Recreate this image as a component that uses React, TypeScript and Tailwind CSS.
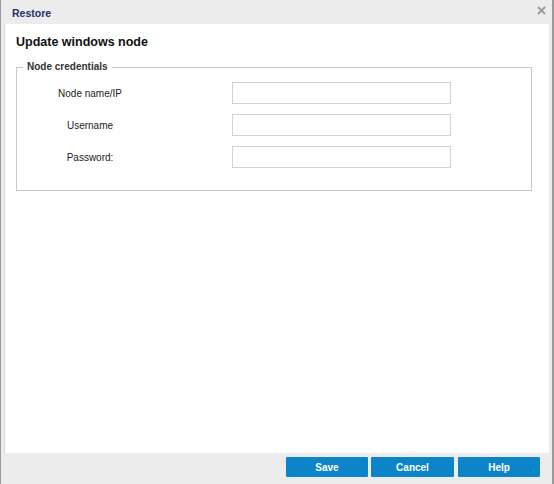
import React from "react";

const font = { fontFamily: '"Liberation Sans", Arial, sans-serif' };

function Row({ label, top }: { label: string; top?: boolean }) {
  return (
    <div className="flex items-center h-[22px]">
      <div className="w-[146px] text-center text-[10px] text-[#222]">{label}</div>
      <div className="w-[69px]" />
      <input
        type="text"
        className={`w-[219px] h-[22px] border bg-white outline-none ${top ? "border-[#c4d4e0]" : "border-[#d2d2d2]"}`}
      />
    </div>
  );
}

export default function App() {
  return (
    <div
      className="w-[554px] h-[484px] flex flex-col bg-[#ececec] border-l border-r-2 border-[#9a9a9a] overflow-hidden"
      style={font}
    >
      <div className="h-[24px] flex items-center justify-between pl-[11px] pr-[6px] pt-[3px] shrink-0">
        <span className="text-[10.5px] font-bold text-[#24306a]">Restore</span>
        <svg width="9" height="9" viewBox="0 0 9 9" className="mb-[7px]">
          <path d="M1 1 L8 8 M8 1 L1 8" stroke="#9a9a9a" strokeWidth="1.8" />
        </svg>
      </div>
      <div className="flex-1 mx-[3px] bg-white border-l border-[#d8d8d8] pl-[11px] pr-[17px]">
        <div className="pt-[10px] text-[12.5px] font-bold text-[#111] leading-[17px]">Update windows node</div>
        <fieldset className="mt-[10px] border border-[#c8c8c8] px-0 pt-0 pb-[22px]">
          <legend className="ml-[6px] px-[4px] text-[10px] font-bold text-[#333] leading-[12px]">Node credentials</legend>
          <div className="flex flex-col gap-[10px] mt-[9px]">
            <Row label="Node name/IP" top />
            <Row label="Username" />
            <Row label="Password:" />
          </div>
        </fieldset>
      </div>
      <div className="h-[31px] shrink-0 flex items-start justify-end gap-[3px] pt-[4px] pr-[12px]">
        {["Save", "Cancel", "Help"].map((t, i) => (
          <button
            key={t}
            className={`h-[20px] ${i === 1 ? "w-[83px]" : "w-[82px]"} bg-[#0b85c8] text-white text-[10px] font-bold rounded-[1px] ${i === 2 ? "ml-[1px]" : ""}`}
          >
            {t}
          </button>
        ))}
      </div>
    </div>
  );
}
